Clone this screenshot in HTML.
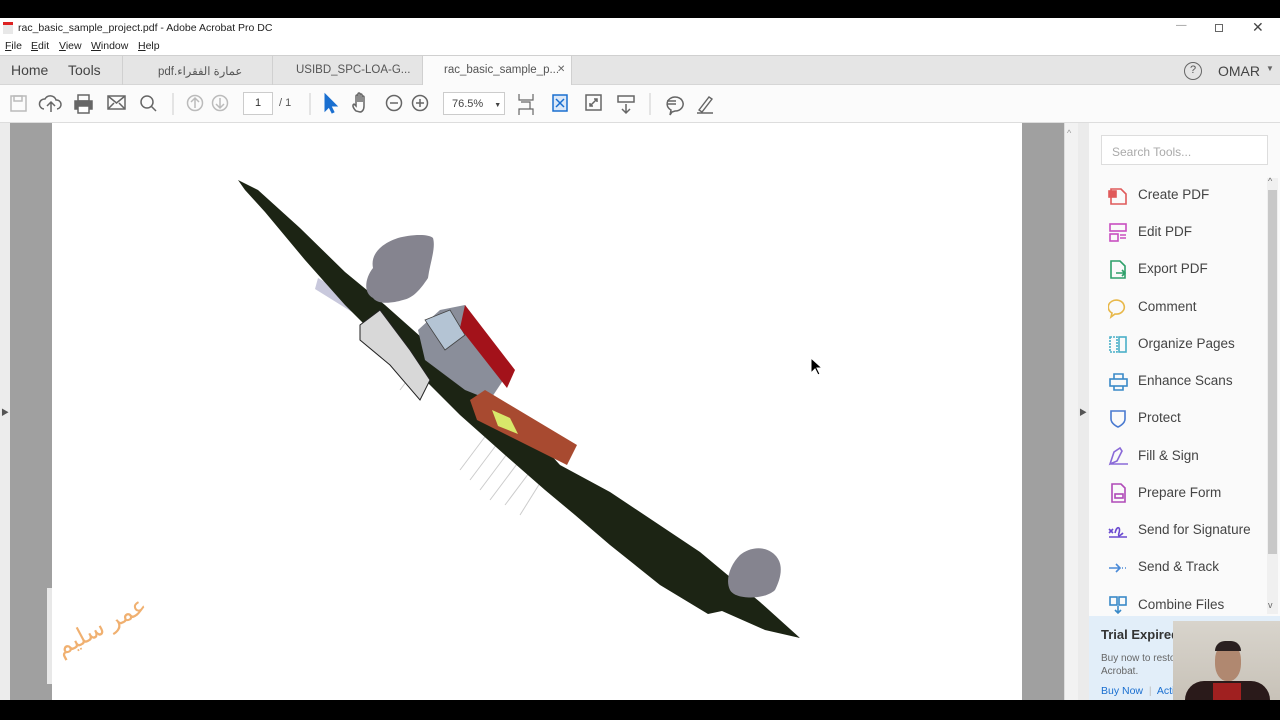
<!DOCTYPE html>
<html><head><meta charset="utf-8">
<style>
*{margin:0;padding:0;box-sizing:border-box}
body{width:1280px;height:720px;overflow:hidden;background:#000;font-family:"Liberation Sans","Noto Sans CJK SC",sans-serif;position:relative;color:#333}
.abs{position:absolute}
.title{top:18px;left:0;width:1280px;height:20px;background:#fff;font-size:10.5px;color:#222}
.menu{top:38px;left:0;width:1280px;height:17px;background:#fff;font-size:10.5px;color:#222}
.tabs{top:55px;left:0;width:1280px;height:30px;background:#e5e5e5;border-top:1px solid #d0d0d0;border-bottom:1px solid #d6d6d6}
.tb{top:85px;left:0;width:1280px;height:38px;background:#fbfbfb;border-bottom:1px solid #ddd}
.tool{position:absolute;left:1110px;font-size:13.5px;color:#444}
</style></head><body>
<div class="abs title">
 <div class="abs" style="left:3px;top:4px;width:10px;height:12px;background:#e8e8e8;border-top:3px solid #d22"></div>
 <span class="abs" style="left:18px;top:4px">rac_basic_sample_project.pdf - Adobe Acrobat Pro DC</span>
 <span class="abs" style="left:1176px;top:1px;color:#888">—</span>
 <div class="abs" style="left:1215px;top:6px;width:8px;height:8px;border:1px solid #666"></div>
 <span class="abs" style="left:1252px;top:1px;font-size:14px;color:#444">✕</span>
</div>
<div class="abs menu">
 <span class="abs" style="left:5px;top:2px"><u>F</u>ile</span>
 <span class="abs" style="left:31px;top:2px"><u>E</u>dit</span>
 <span class="abs" style="left:59px;top:2px"><u>V</u>iew</span>
 <span class="abs" style="left:91px;top:2px"><u>W</u>indow</span>
 <span class="abs" style="left:138px;top:2px"><u>H</u>elp</span>
</div>
<div class="abs tabs">
 <span class="abs" style="left:11px;top:6px;font-size:14px;color:#444">Home</span>
 <span class="abs" style="left:68px;top:6px;font-size:14px;color:#444">Tools</span>
 <div class="abs" style="left:122px;top:0;width:1px;height:29px;background:#d0d0d0"></div>
 <span class="abs" style="left:158px;top:8px;font-size:11.5px;color:#555">pdf.عمارة الفقراء</span>
 <div class="abs" style="left:272px;top:0;width:1px;height:29px;background:#d0d0d0"></div>
 <span class="abs" style="left:296px;top:8px;font-size:11.5px;color:#555">USIBD_SPC-LOA-G...</span>
 <div class="abs" style="left:422px;top:0;width:150px;height:30px;background:#fbfbfb;border-left:1px solid #d0d0d0;border-right:1px solid #d0d0d0"></div>
 <span class="abs" style="left:444px;top:8px;font-size:11.5px;color:#555">rac_basic_sample_p...</span>
 <span class="abs" style="left:557px;top:8px;font-size:10px;color:#666">✕</span>
 <div class="abs" style="left:1184px;top:6px;width:18px;height:18px;border:1.5px solid #666;border-radius:50%;font-size:11px;text-align:center;line-height:15px;color:#555">?</div>
 <span class="abs" style="left:1218px;top:7px;font-size:14px;color:#444">OMAR</span>
 <span class="abs" style="left:1266px;top:8px;font-size:8px;color:#666">▼</span>
</div>
<div class="abs tb">
<svg width="760" height="38" style="position:absolute;left:0;top:0" fill="none" stroke="#666" stroke-width="1.5">
 <rect x="11" y="11" width="15" height="15" stroke="#bbb"/><rect x="14" y="11" width="8" height="5" stroke="#bbb"/>
 <path d="M44 24a5 5 0 0 1 1-10a6 6 0 0 1 11 1a4.5 4.5 0 0 1 1 9M51 27v-10M47 21l4-4 4 4"/>
 <rect x="75" y="16" width="17" height="8" fill="#666"/><rect x="78" y="10" width="11" height="6"/><rect x="78" y="21" width="11" height="7" fill="#fff"/>
 <rect x="108" y="11" width="17" height="13"/><path d="M108 11l8.5 7 8.5-7M108 24l6-6M125 24l-6-6"/>
 <circle cx="147" cy="17" r="6"/><path d="M151 21l5 5"/>
 <path d="M173 8v22" stroke="#ddd"/>
 <circle cx="195" cy="18" r="7.5" stroke="#bbb"/><path d="M195 23v-10M191 17l4-4 4 4" stroke="#bbb"/>
 <circle cx="220" cy="18" r="7.5" stroke="#bbb"/><path d="M220 13v10M216 19l4 4 4-4" stroke="#bbb"/>
 <path d="M310 8v22" stroke="#ddd"/>
 <path d="M325 9l0 17 4-4 3 6 2-1-3-6 6 0z" fill="#1a6fd0" stroke="#1a6fd0" stroke-width="1"/>
 <path d="M356 26c-3-3-4-6-2-7l2 2v-10a1 1 0 0 1 2 0v6-8a1 1 0 0 1 2 0v8-7a1 1 0 0 1 2 0v7-5a1 1 0 0 1 2 0v9c0 4-2 6-4 6z"/>
 <circle cx="394" cy="18" r="7.5"/><path d="M390 18h8"/>
 <circle cx="420" cy="18" r="7.5"/><path d="M416 18h8M420 14v8"/>
 <path d="M519 9v6h14v-6M519 30v-6h14v6M521 17h9v7" stroke-width="1.2"/>
 <rect x="553" y="10" width="14" height="16" stroke="#1a6fd0" fill="#dbe8f8"/><path d="M556 14l8 8M564 14l-8 8" stroke="#1a6fd0"/>
 <rect x="586" y="10" width="15" height="15"/><path d="M590 21l7-7M594 14h3v3M590 18v3h3"/>
 <rect x="618" y="11" width="16" height="6"/><path d="M626 19v9M622 24l4 4 4-4"/>
 <path d="M650 8v22" stroke="#ddd"/>
 <path d="M672 27l-2 3 1-5a8 7 0 1 1 4 1z"/><path d="M667 16h9M667 19h9"/>
 <path d="M699 25l10-13 3 2-10 13zM697 28h16" stroke-width="1.4"/>
</svg>
 <div class="abs" style="left:243px;top:7px;width:30px;height:23px;border:1px solid #ccc;background:#fff;font-size:11px;text-align:center;line-height:21px">1</div>
 <span class="abs" style="left:279px;top:12px;font-size:11px;color:#555">/ 1</span>
 <div class="abs" style="left:443px;top:7px;width:62px;height:23px;border:1px solid #ccc;background:#fff;font-size:11px;padding:5px 0 0 8px;color:#444">76.5% <span style="font-size:7px;margin-left:8px">▼</span></div>
</div>
<!-- content -->
<div class="abs" style="left:0;top:123px;width:10px;height:577px;background:#ececec"></div>
<span class="abs" style="left:1px;top:407px;font-size:8px;color:#555">▶</span>
<div class="abs" style="left:10px;top:123px;width:42px;height:577px;background:#a0a0a0"></div>
<div class="abs" style="left:47px;top:588px;width:5px;height:96px;background:#e8e8e8"></div>
<div class="abs" style="left:52px;top:123px;width:970px;height:577px;background:#fff"></div>
<div class="abs" style="left:1022px;top:123px;width:42px;height:577px;background:#a0a0a0"></div>
<div class="abs" style="left:1064px;top:123px;width:14px;height:577px;background:#f2f2f2;border-left:1px solid #ddd"></div>
<span class="abs" style="left:1067px;top:128px;font-size:9px;color:#999">^</span>
<div class="abs" style="left:1078px;top:123px;width:11px;height:577px;background:#ebebeb"></div>
<span class="abs" style="left:1079px;top:407px;font-size:8px;color:#555">▶</span>
<div class="abs" style="left:1089px;top:123px;width:191px;height:577px;background:#fafafa"></div>
<!-- drawing -->
<svg class="abs" style="left:0;top:0" width="1022" height="700">
 <path d="M318 278l45 25 -3 14 -45-28z" fill="#c8c8dc"/>
 <g stroke="#ccc" stroke-width="1"><path d="M460 470l30-40M470 480l30-40M480 490l30-40M490 500l30-40M505 505l30-40M520 515l25-40M400 390l15-20"/></g>
 <path d="M238 180L258 190L300 228L345 272L385 305L430 345L470 383L530 432L560 465L610 492L700 552L760 602L800 638L765 630L722 611L708 614L660 585L610 545L575 515L545 490L505 455L460 415L420 375L380 340L345 305L305 260L265 212L245 190Z" fill="#1c2414"/>
 <path d="M360 325l20-15 30 40 20 30-10 20-30-35-30-25z" fill="#d8d8d8" stroke="#222"/>
 <path d="M373 298c-10-5-8-20 0-30-3-15 10-25 25-30 10-3 30-5 35 0 3 10-3 25-5 40-8 12-15 20-25 22-10 3-25 5-30-2z" fill="#85848f"/>
 <path d="M730 590c-5-10 0-25 10-35 10-8 25-10 35 0 10 10 5 25 0 35-10 10-40 10-45 0z" fill="#85848f"/>
 <path d="M418 330l22-20 25-5 45 65-20 30-25-10-40-30z" fill="#8a8e9a"/>
 <path d="M425 320l25-10 15 25-20 15z" fill="#b4c4d4" stroke="#444" stroke-width="0.8"/>
 <path d="M465 305l50 65-8 18-47-60z" fill="#a3121a"/>
 <path d="M470 400l15-10 92 55-10 20-90-45z" fill="#a84a30"/>
 <path d="M492 410l18 8 8 16-20-8z" fill="#d8e86a"/>
</svg>
<span class="abs" style="left:52px;top:612px;font-size:24px;color:#f0b070;transform:rotate(-28deg);font-family:'Liberation Serif',serif">عمر سليم</span>
<svg class="abs" style="left:810px;top:357px" width="14" height="20"><path d="M1 1v15l4-4 3 6 2-1-3-6h5z" fill="#000" stroke="#fff"/></svg>
<!-- tools -->
<div class="abs" style="left:1101px;top:135px;width:167px;height:30px;border:1px solid #ddd;background:#fff;font-size:12px;color:#aaa;padding:9px 10px">Search Tools...</div>
<div class="abs" style="left:1267px;top:178px;width:11px;height:436px;background:#f0f0f0"></div>
<div class="abs" style="left:1268px;top:190px;width:9px;height:364px;background:#c8c8c8"></div>
<span class="abs" style="left:1268px;top:176px;font-size:9px;color:#666">^</span>
<span class="abs" style="left:1268px;top:600px;font-size:9px;color:#666">v</span>
<svg class="abs" style="left:1108px;top:185px" width="22" height="430" fill="none" stroke-width="1.6">
 <g stroke="#e05a5a"><path d="M3 4h10l5 5v10H3z"/><rect x="1" y="6" width="7" height="6" fill="#e05a5a"/></g>
 <g transform="translate(0,38)" stroke="#c94fc0"><rect x="2" y="1" width="16" height="7"/><rect x="2" y="11" width="8" height="7"/><path d="M12 12h6M12 15h6"/></g>
 <g transform="translate(0,75)" stroke="#2ea06a"><path d="M3 1h9l5 5v12H3z"/><path d="M8 13h9M14 10l3 3-3 3"/></g>
 <g transform="translate(0,112)" stroke="#e8b84a"><path d="M4 16l-1 4 4-3a8 7 0 1 0-3-1z"/></g>
 <g transform="translate(0,150)" stroke="#4ab0c8"><rect x="2" y="2" width="7" height="15" stroke-dasharray="2 1"/><rect x="11" y="2" width="7" height="15"/></g>
 <g transform="translate(0,187)" stroke="#3a8ac8"><rect x="2" y="7" width="17" height="7"/><path d="M6 7V2h9v5M6 14v4h9v-4"/></g>
 <g transform="translate(0,224)" stroke="#4a7ad0"><path d="M3 2h14v8c0 5-7 8-7 8s-7-3-7-8z"/></g>
 <g transform="translate(0,261)" stroke="#8a6ad8"><path d="M2 18l4-12 6-4 2 3-5 10zM2 18h18"/></g>
 <g transform="translate(0,298)" stroke="#b04ab8"><path d="M4 1h9l4 4v14H4z"/><rect x="7" y="11" width="8" height="4"/></g>
 <g transform="translate(0,336)" stroke="#6a4ad0"><path d="M1 8l4 4M5 8l-4 4M7 12c2-8 6-6 4 0s4 0 4 0M1 16h18"/></g>
 <g transform="translate(0,373)" stroke="#4a8ad8"><path d="M1 10h11M8 6l4 4-4 4" /><path d="M14 10h6" stroke-dasharray="1 2"/></g>
 <g transform="translate(0,410)" stroke="#3a8ac8"><rect x="2" y="2" width="7" height="8"/><rect x="11" y="2" width="7" height="8"/><path d="M10 11v7M7 15l3 3 3-3"/></g>
</svg>
<span class="tool" style="left:1138px;top:187px">Create PDF</span>
<span class="tool" style="left:1138px;top:224px">Edit PDF</span>
<span class="tool" style="left:1138px;top:261px">Export PDF</span>
<span class="tool" style="left:1138px;top:299px">Comment</span>
<span class="tool" style="left:1138px;top:336px">Organize Pages</span>
<span class="tool" style="left:1138px;top:373px">Enhance Scans</span>
<span class="tool" style="left:1138px;top:410px">Protect</span>
<span class="tool" style="left:1138px;top:448px">Fill &amp; Sign</span>
<span class="tool" style="left:1138px;top:485px">Prepare Form</span>
<span class="tool" style="left:1138px;top:522px">Send for Signature</span>
<span class="tool" style="left:1138px;top:559px">Send &amp; Track</span>
<span class="tool" style="left:1138px;top:597px">Combine Files</span>
<div class="abs" style="left:1089px;top:616px;width:191px;height:84px;background:#e2eef9"></div>
<span class="abs" style="left:1101px;top:627px;font-size:13px;font-weight:bold;color:#333">Trial Expired</span>
<span class="abs" style="left:1101px;top:652px;font-size:10px;color:#666;line-height:13px">Buy now to restore<br>Acrobat.</span>
<span class="abs" style="left:1101px;top:685px;font-size:10.5px;color:#1a6fd0">Buy Now &nbsp;<span style="color:#bbb">|</span>&nbsp; Activate</span>
<!-- webcam -->
<div class="abs" style="left:1173px;top:621px;width:107px;height:79px;background:linear-gradient(#d8d4cc,#c8c2b8)">
 <div class="abs" style="left:12px;top:60px;width:85px;height:19px;background:#2a1a1a;border-radius:30px 30px 0 0"></div>
 <div class="abs" style="left:40px;top:62px;width:28px;height:17px;background:#a02020"></div>
 <div class="abs" style="left:42px;top:22px;width:26px;height:38px;background:#b08870;border-radius:45%"></div>
 <div class="abs" style="left:42px;top:20px;width:26px;height:10px;background:#2a2020;border-radius:12px 12px 0 0"></div>
</div>
</body></html>
